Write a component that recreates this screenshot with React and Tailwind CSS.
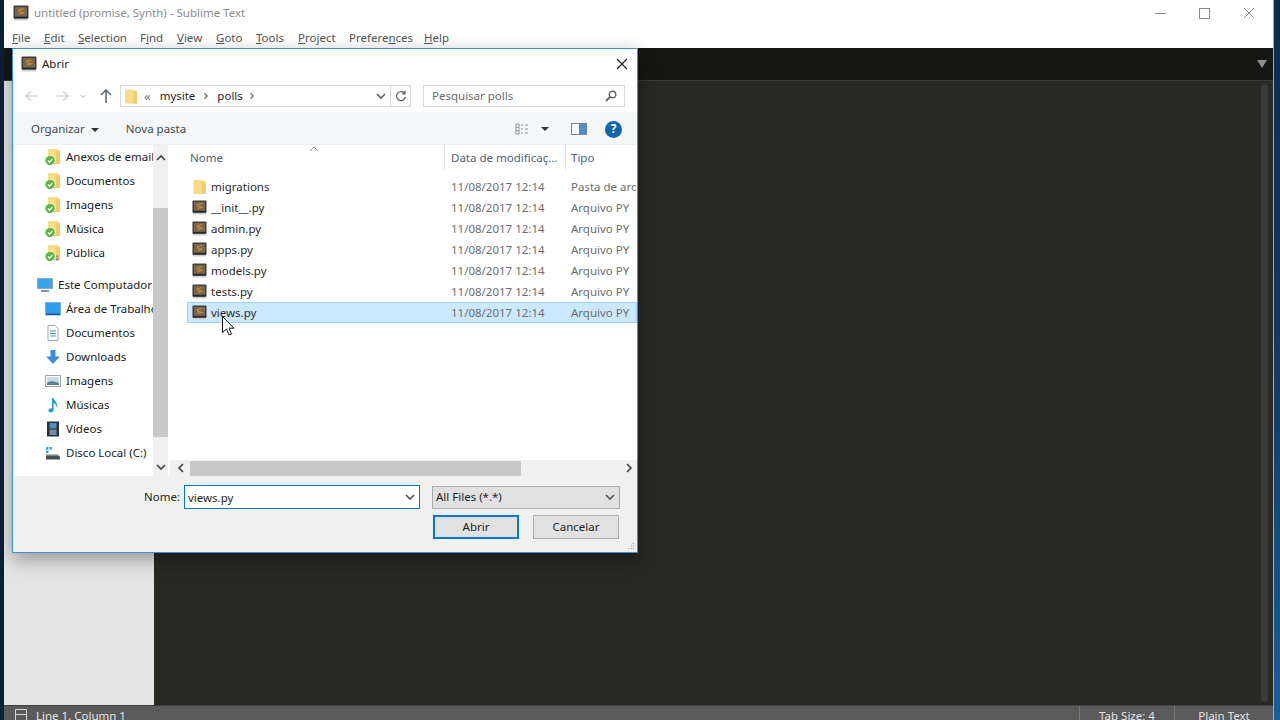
import React from 'react';

const menuItems = [
  { before: '', key: 'F', after: 'ile', width: 'w-[32px]' },
  { before: '', key: 'E', after: 'dit', width: 'w-[34px]' },
  { before: '', key: 'S', after: 'election', width: 'w-[62px]' },
  { before: 'F', key: 'i', after: 'nd', width: 'w-[37px]' },
  { before: '', key: 'V', after: 'iew', width: 'w-[39px]' },
  { before: '', key: 'G', after: 'oto', width: 'w-[40px]' },
  { before: '', key: 'T', after: 'ools', width: 'w-[42px]' },
  { before: '', key: 'P', after: 'roject', width: 'w-[51px]' },
  { before: 'Prefere', key: 'n', after: 'ces', width: 'w-[75px]' },
  { before: '', key: 'H', after: 'elp', width: 'w-[30px]' },
];

const quickAccess = ['Anexos de email', 'Documentos', 'Imagens', 'Música', 'Pública'];

const files = [
  { name: 'migrations', kind: 'Pasta de arquivos', folder: true },
  { name: '__init__.py', kind: 'Arquivo PY' },
  { name: 'admin.py', kind: 'Arquivo PY' },
  { name: 'apps.py', kind: 'Arquivo PY' },
  { name: 'models.py', kind: 'Arquivo PY' },
  { name: 'tests.py', kind: 'Arquivo PY' },
  { name: 'views.py', kind: 'Arquivo PY', selected: true },
];

function SublimeIcon({ className }) {
  return (
    <svg viewBox="0 0 16 16" className={className}>
      <rect x="0.500" y="0.500" width="15" height="13" rx="1" fill="#3d3d3d" />
      <rect x="2" y="2" width="12" height="9.500" fill="#76664e" />
      <path d="M10.500 3.800 6 5v1.500l4.500 1.300L6 9" fill="none" stroke="#d9882c" strokeWidth="1.200" />
      <rect x="1" y="13.500" width="14" height="2" fill="#cfcfcf" />
      <rect x="1" y="12" width="14" height="1.500" fill="#222" />
    </svg>
  );
}

function FolderIcon({ className }) {
  return (
    <svg viewBox="0 0 14 16" className={className}>
      <path d="M1 1h8l4 2v12H1z" fill="#f8dc8a" />
      <path d="M9.500 1.500 13 3v12H9.500z" fill="#f2cc6a" />
    </svg>
  );
}

function SyncedFolderIcon({ shared }) {
  return (
    <svg viewBox="0 0 16 18" className="h-[18px] w-[16px] shrink-0">
      <path d="M3 1h8l4 2v13H3z" fill="#f8dc8a" />
      <path d="M11 1.500 15 3v13h-4z" fill="#f2cc6a" />
      <circle cx="5" cy="12.500" r="4.500" fill="#5cb54a" />
      <path d="m2.800 12.500 1.700 1.700 2.800-3" fill="none" stroke="#fff" strokeWidth="1.200" />
      {shared && <path d="M11 11.500h2.500v1.600H11zM11 14h2.500v2.500H11z" fill="#8a8f94" />}
    </svg>
  );
}

function NavIcon({ name }) {
  if (name === 'computer') {
    return (
      <svg viewBox="0 0 16 16" className="h-4 w-4 shrink-0">
        <rect x="0.500" y="1.500" width="15" height="10" fill="#3aa4ea" stroke="#8fa9bb" />
        <path d="M4 14h8" stroke="#7d98ad" strokeWidth="2" />
      </svg>
    );
  }
  if (name === 'desktop') {
    return (
      <svg viewBox="0 0 16 16" className="h-4 w-4 shrink-0">
        <rect x="0.500" y="1.500" width="15" height="12.500" fill="#2f9cf0" stroke="#6fb3e6" />
        <rect x="1" y="12.500" width="14" height="1.500" fill="#1a5f94" />
      </svg>
    );
  }
  if (name === 'docs') {
    return (
      <svg viewBox="0 0 16 16" className="h-4 w-4 shrink-0">
        <path d="M3 .5h7l3 3v12H3z" fill="#fff" stroke="#9aa5ad" />
        <path d="M5 6h6M5 8.500h6M5 11h6" stroke="#3f8fca" />
      </svg>
    );
  }
  if (name === 'down') {
    return (
      <svg viewBox="0 0 16 16" className="h-4 w-4 shrink-0">
        <path d="M5.500 1h5v6.500H15L8 15 1 7.500h4.500z" fill="#3d8fd8" />
      </svg>
    );
  }
  if (name === 'images') {
    return (
      <svg viewBox="0 0 16 16" className="h-4 w-4 shrink-0">
        <rect x="0.500" y="2.500" width="15" height="11" fill="#fff" stroke="#9aa5ad" />
        <rect x="2" y="4" width="12" height="8" fill="#c7dbe9" />
        <path d="M2 10c3-2.500 6-2.500 12 0v2H2z" fill="#5f7f95" />
      </svg>
    );
  }
  if (name === 'music') {
    return (
      <svg viewBox="0 0 16 16" className="h-4 w-4 shrink-0">
        <path d="M7 1h1.600c.3 2.500 3.400 3.500 3.400 7 0 1-.3 1.800-.8 2.500.2-2.500-1-4-2.600-4.500V13c0 1.500-1.500 2.500-3 2.500S3.500 14.500 3.500 13.200 5 11 7 11.200z" fill="#1f9fdc" />
      </svg>
    );
  }
  if (name === 'video') {
    return (
      <svg viewBox="0 0 16 16" className="h-4 w-4 shrink-0">
        <rect x="2" y="0.500" width="12" height="15" fill="#2c3138" />
        <rect x="4.500" y="2" width="7" height="5.500" fill="#4f8fc0" />
        <rect x="4.500" y="8.500" width="7" height="5.500" fill="#6d8fa5" />
      </svg>
    );
  }
  return (
    <svg viewBox="0 0 16 16" className="h-4 w-4 shrink-0">
      <rect x="1" y="2" width="2.500" height="2.500" fill="#38a3d8" />
      <rect x="4.500" y="2" width="2.500" height="2.500" fill="#38a3d8" />
      <rect x="1" y="5.500" width="2.500" height="2.500" fill="#38a3d8" />
      <path d="M1 10h12l2 2v2.500H1z" fill="#4a4f55" />
      <rect x="1" y="9" width="12" height="1.500" fill="#b5bcc2" />
    </svg>
  );
}

function NavRow({ children, icon, indent = 'pl-[32px]' }) {
  return (
    <div className={`flex h-[24px] items-center gap-[5px] whitespace-nowrap text-[#1b1b1b] ${indent}`}>
      {icon}
      <span>{children}</span>
    </div>
  );
}

function Chevron({ d, className = 'h-[10px] w-[10px]', color = '#555' }) {
  return (
    <svg viewBox="0 0 10 10" className={className}>
      <path d={d} fill="none" stroke={color} strokeWidth="1.700" />
    </svg>
  );
}

function Arrow({ dir, color }) {
  const d = dir === 'left' ? 'M14 8H2m5-5L2 8l5 5' : dir === 'right' ? 'M2 8h12M9 3l5 5-5 5' : 'M8 15V2M3 7l5-5 5 5';
  return (
    <svg viewBox="0 0 16 16" className="h-[16px] w-[16px]">
      <path d={d} fill="none" stroke={color} strokeWidth="1.600" />
    </svg>
  );
}

function FileRow({ file }) {
  const rowClass = file.selected
    ? 'border-[#99d1ff] bg-[#cce8ff]'
    : 'border-transparent';
  return (
    <div className={`flex h-[21px] items-center overflow-hidden whitespace-nowrap border ${rowClass}`}>
      <div className="flex w-[263px] shrink-0 items-center gap-[4px] pl-[4px]">
        {file.folder ? (
          <FolderIcon className="h-[16px] w-[15px] shrink-0" />
        ) : (
          <SublimeIcon className="h-[15px] w-[15px] shrink-0" />
        )}
        <span className="text-[#2a2a2a]">{file.name}</span>
      </div>
      <div className="w-[120px] shrink-0 text-[#6d6d6d]">11/08/2017 12:14</div>
      <div className="shrink-0 text-[#6d6d6d]">{file.kind}</div>
    </div>
  );
}

function Dialog() {
  return (
    <div className="absolute left-[12px] top-[48px] flex h-[505px] w-[626px] flex-col overflow-hidden border border-[#3d93c9] bg-white text-[11.5px] shadow-[0_6px_18px_rgba(0,0,0,0.35)]">
      <div className="flex h-[29px] shrink-0 items-center pl-[8px] pr-[9px]">
        <SublimeIcon className="h-[16px] w-[16px]" />
        <span className="ml-[5px] text-[#222]">Abrir</span>
        <svg viewBox="0 0 12 12" className="ml-auto h-[12px] w-[12px]">
          <path d="M1 1l10 10M11 1 1 11" stroke="#222" strokeWidth="1.200" />
        </svg>
      </div>

      <div className="flex h-[34px] shrink-0 items-center pt-[2px]">
        <div className="flex w-[107px] shrink-0 items-center pl-[11px]">
          <Arrow dir="left" color="#d5d5d5" />
          <div className="ml-[14px]">
            <Arrow dir="right" color="#d5d5d5" />
          </div>
          <Chevron d="M2 4l3 3 3-3" className="ml-[9px] h-[8px] w-[8px]" color="#d5d5d5" />
          <div className="ml-[11px]">
            <Arrow dir="up" color="#5d6b75" />
          </div>
        </div>
        <div className="flex h-[22px] w-[291px] shrink-0 items-center border border-[#d9d9d9]">
          <FolderIcon className="ml-[3px] h-[17px] w-[14px]" />
          <span className="ml-[6px] text-[13px] leading-none text-[#777]">«</span>
          <span className="ml-[9px] text-[#1f1f1f]">mysite</span>
          <Chevron d="M3 1.500l3.500 3.500L3 8.500" className="ml-[7px] h-[8px] w-[8px]" color="#777" />
          <span className="ml-[7px] text-[#1f1f1f]">polls</span>
          <Chevron d="M3 1.500l3.500 3.500L3 8.500" className="ml-[5px] h-[8px] w-[8px]" color="#777" />
          <div className="ml-auto flex h-full items-center">
            <Chevron d="M1 3l4 4 4-4" className="mr-[4px] h-[10px] w-[10px]" color="#666" />
            <div className="flex h-full w-[20px] items-center justify-center border-l border-[#d9d9d9]">
              <svg viewBox="0 0 12 12" className="h-[12px] w-[12px]">
                <path d="M9.800 3.500A4.500 4.500 0 1 0 10.500 7M10 .8v3H7" fill="none" stroke="#666" strokeWidth="1.300" />
              </svg>
            </div>
          </div>
        </div>
        <div className="ml-[12px] flex h-[22px] w-[202px] shrink-0 items-center justify-between border border-[#d9d9d9] pl-[8px] pr-[7px] text-[#6d6d6d]">
          <span>Pesquisar polls</span>
          <svg viewBox="0 0 12 12" className="h-[12px] w-[12px]">
            <circle cx="7.500" cy="4.500" r="3.300" fill="none" stroke="#666" strokeWidth="1.400" />
            <path d="M5 7 1 11" stroke="#666" strokeWidth="2" />
          </svg>
        </div>
      </div>

      <div className="flex h-[33px] shrink-0 items-center border-b border-[#ededed] bg-[#f5f6f7] pl-[18px] pr-[15px] pt-[2px] text-[#3f4a56]">
        <span>Organizar</span>
        <div className="ml-[6px] mt-[1px] h-0 w-0 border-x-[4px] border-t-[4px] border-x-transparent border-t-[#333]" />
        <span className="ml-[27px]">Nova pasta</span>
        <svg viewBox="0 0 16 12" className="ml-auto h-[12px] w-[16px]">
          <path d="M1 1h3v10H1zM1 4.300h3M1 7.600h3M6 2h2M10 2h3M6 6h2M10 6h3M6 10h2M10 10h3" fill="none" stroke="#8b949c" />
        </svg>
        <div className="ml-[10px] h-0 w-0 border-x-[4px] border-t-[4px] border-x-transparent border-t-[#333]" />
        <div className="ml-[22px] flex h-[12px] w-[16px] border border-[#7b8790] bg-white">
          <div className="ml-auto w-[7px] bg-[#4a90d0]" />
        </div>
        <div className="ml-[18px] flex h-[17px] w-[17px] items-center justify-center rounded-full bg-[#0f64b0] text-[12px] font-bold text-white">
          ?
        </div>
      </div>

      <div className="flex min-h-0 flex-1">
        <div className="flex w-[140px] shrink-0 flex-col overflow-hidden">
          {quickAccess.map((label) => (
            <NavRow key={label} icon={<SyncedFolderIcon shared={label === 'Pública'} />}>
              {label}
            </NavRow>
          ))}
          <div className="h-[8px] shrink-0" />
          <NavRow indent="pl-[24px]" icon={<NavIcon name="computer" />}>
            Este Computador
          </NavRow>
          <NavRow icon={<NavIcon name="desktop" />}>Área de Trabalho</NavRow>
          <NavRow icon={<NavIcon name="docs" />}>Documentos</NavRow>
          <NavRow icon={<NavIcon name="down" />}>Downloads</NavRow>
          <NavRow icon={<NavIcon name="images" />}>Imagens</NavRow>
          <NavRow icon={<NavIcon name="music" />}>Músicas</NavRow>
          <NavRow icon={<NavIcon name="video" />}>Vídeos</NavRow>
          <NavRow icon={<NavIcon name="disk" />}>Disco Local (C:)</NavRow>
        </div>

        <div className="flex w-[15px] shrink-0 flex-col bg-[#f0f0f0]">
          <div className="flex h-[63px] justify-center pt-[8px]">
            <Chevron d="M1 7l4-4 4 4" color="#444" />
          </div>
          <div className="h-[229px] bg-[#c8c8c8]" />
          <div className="flex flex-1 items-end justify-center pb-[4px]">
            <Chevron d="M1 3l4 4 4-4" color="#444" />
          </div>
        </div>

        <div className="relative flex min-w-0 flex-1 flex-col overflow-hidden pl-[2px]">
          <div className="flex h-[25px] shrink-0 items-center text-[#4c607a]">
            <div className="flex h-full w-[275px] items-center border-r border-[#e5e5e5] pl-[20px]">Nome</div>
            <div className="flex h-full w-[121px] items-center whitespace-nowrap border-r border-[#e5e5e5] pl-[6px]">
              Data de modificaç...
            </div>
            <div className="pl-[5px]">Tipo</div>
          </div>
          <svg viewBox="0 0 10 6" className="absolute left-[141px] top-[1px] h-[6px] w-[10px]">
            <path d="M1 5l4-4 4 4" fill="none" stroke="#8c9aa8" />
          </svg>
          <div className="ml-[17px] min-h-0 flex-1 pt-[6px]">
            {files.map((file) => (
              <FileRow key={file.name} file={file} />
            ))}
          </div>
          <div className="flex h-[16px] shrink-0 items-center bg-[#f0f0f0]">
            <Chevron d="M7 1 3 5l4 4" className="ml-[6px] h-[10px] w-[10px]" color="#444" />
            <div className="ml-[4px] h-[15px] w-[331px] bg-[#c8c8c8]" />
            <Chevron d="M3 1l4 4-4 4" className="ml-auto mr-[3px] h-[10px] w-[10px]" color="#444" />
          </div>
        </div>
      </div>

      <div className="relative h-[76px] shrink-0 bg-[#f0f0f0] pt-[9px] text-[#1f1f1f]">
        <div className="flex items-center">
          <span className="w-[167px] text-right">Nome:</span>
          <div className="ml-[4px] flex h-[24px] w-[236px] items-center justify-between border border-[#0078d7] bg-white pl-[3px] pr-[4px]">
            <span className="pt-[1px]">views.py</span>
            <Chevron d="M1 3l4 4 4-4" color="#555" />
          </div>
          <div className="ml-[12px] flex h-[23px] w-[188px] items-center justify-between border border-[#adadad] bg-[#e1e1e1] pl-[3px] pr-[4px]">
            <span>All Files (*.*)</span>
            <Chevron d="M1 3l4 4 4-4" color="#555" />
          </div>
        </div>
        <div className="ml-[420px] mt-[6px] flex gap-[14px]">
          <div className="flex h-[24px] w-[86px] items-center justify-center border-2 border-[#0078d7] bg-[#e1e1e1]">Abrir</div>
          <div className="flex h-[24px] w-[86px] items-center justify-center border border-[#adadad] bg-[#e1e1e1]">Cancelar</div>
        </div>
        <svg viewBox="0 0 8 8" className="absolute bottom-[2px] right-[2px] h-[8px] w-[8px]">
          <path d="M6 1h1v1H6zM4 3.500h1v1H4zM6 3.500h1v1H6zM1.500 6h1v1h-1zM4 6h1v1H4zM6 6h1v1H6z" fill="#9a9a9a" />
        </svg>
      </div>
    </div>
  );
}

export default function App() {
  return (
    <div className="relative flex h-[720px] w-[1280px] overflow-hidden bg-[#0a1f38] font-['Noto_Sans',sans-serif] text-[11.5px]">
      <div className="ml-[4px] flex w-[1270px] flex-col border-r border-[#a9adb0]">
        <div className="flex h-[26px] shrink-0 items-center bg-white pl-[9px] text-[#8a8a8a]">
          <SublimeIcon className="h-[16px] w-[16px]" />
          <span className="ml-[5px]">untitled (promise, Synth) - Sublime Text</span>
          <div className="ml-auto flex items-center gap-[33px] pr-[18px]">
            <div className="h-px w-[11px] bg-[#8a8a8a]" />
            <div className="h-[11px] w-[11px] border border-[#8a8a8a]" />
            <svg viewBox="0 0 12 12" className="h-[12px] w-[12px]">
              <path d="M1 1l10 10M11 1 1 11" stroke="#8a8a8a" />
            </svg>
          </div>
        </div>
        <div className="flex h-[22px] shrink-0 items-center bg-white pl-[8px] pt-[2px] text-[#555]">
          {menuItems.map((item) => (
            <span key={item.before + item.key} className={`shrink-0 whitespace-nowrap ${item.width}`}>
              {item.before}
              <span className="underline">{item.key}</span>
              {item.after}
            </span>
          ))}
        </div>
        <div className="flex h-[33px] shrink-0 items-center justify-end border-b border-[#3a3a36] bg-[#161613] pr-[6px]">
          <div className="h-0 w-0 border-x-[5px] border-t-[8px] border-x-transparent border-t-[#8e8e8b]" />
        </div>
        <div className="flex min-h-0 flex-1">
          <div className="w-[150px] shrink-0 bg-[#e4e4e4]" />
          <div className="flex flex-1 justify-end bg-[#282923] py-[3px] pr-[5px]">
            <div className="w-[7px] rounded-sm bg-[#3a3a38]" />
          </div>
        </div>
        <div className="flex h-[15px] shrink-0 overflow-hidden border-t border-[#3f3f3f] bg-[#5a5a5a] text-[#e4e4e4]">
          <svg viewBox="0 0 12 12" className="ml-[11px] mt-[3px] h-[12px] w-[12px]">
            <path d="M.5.500h11v11H.500zM.5 5.500h11" fill="none" stroke="#d8d8d8" />
          </svg>
          <span className="ml-[9px] leading-[20px]">Line 1, Column 1</span>
          <div className="ml-auto flex w-[95px] justify-center border-l border-[#787878] leading-[20px]">Tab Size: 4</div>
          <div className="flex w-[99px] justify-center border-l border-[#787878] leading-[20px]">Plain Text</div>
        </div>
      </div>
      <div className="flex-1 bg-gradient-to-b from-[#0d2c4d] via-[#123a62] to-[#1a5f9a]" />

      <Dialog />

      <svg viewBox="0 0 13 20" className="absolute left-[222px] top-[316px] h-[20px] w-[13px]">
        <path d="M.5.500v16l4-3.500 2.500 6 2.500-1-2.500-5.800h5z" fill="#fff" stroke="#111" />
      </svg>
    </div>
  );
}
